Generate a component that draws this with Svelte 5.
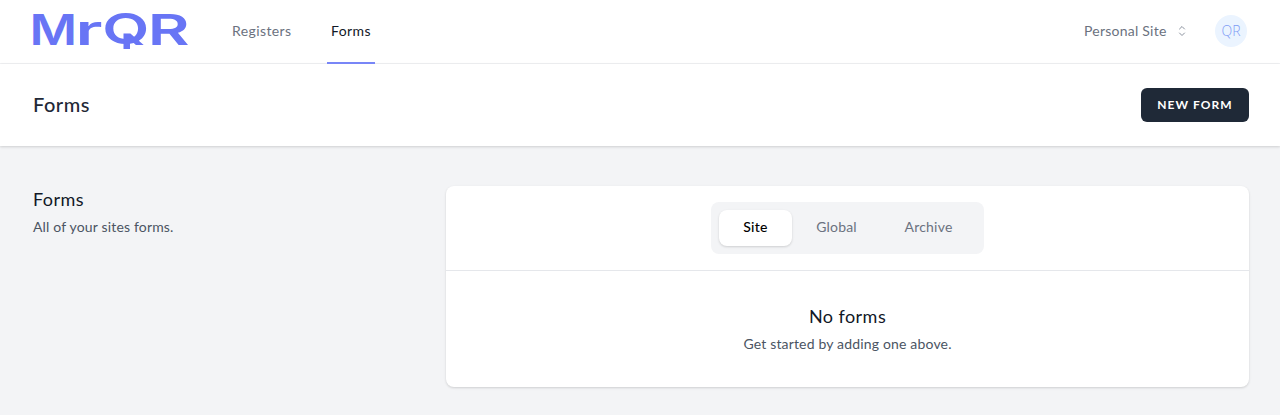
<script>
  const nav = [
    { label: 'Registers', active: false },
    { label: 'Forms', active: true }
  ];
  const tabs = ['Site', 'Global', 'Archive'];
  let selected = $state('Site');
</script>

<div class="page">
  <nav class="topbar">
    <svg class="logo" width="156" height="38" viewBox="0 0 156 38" aria-label="MrQR">
      <defs>
        <clipPath id="bowl"><rect x="70" y="-2" width="48" height="34" /></clipPath>
      </defs>
      <g class="letters">
        <text transform="translate(-3.6 31.5) scale(1.2 1)">M</text>
        <text transform="translate(42.4 31.5) scale(1.58 .96)">r</text>
        <g clip-path="url(#bowl)"><text transform="translate(69.2 31.3) scale(1.42 1)">Q</text></g>
        <text transform="translate(114.7 31.5) scale(1.49 1)">R</text>
      </g>
      <rect class="tail" x="90.5" y="21" width="6.5" height="15" />
    </svg>
    <div class="links">
      {#each nav as item}
        <a class="link" class:active={item.active} href="#top"><span class="{item.label.toLowerCase()}">{item.label}</span></a>
      {/each}
    </div>
    <div class="account">
      <span class="site">Personal Site</span>
      <svg class="chevrons" width="16" height="16" viewBox="0 0 24 24" fill="none" stroke="currentColor" stroke-width="1.5" stroke-linecap="round" stroke-linejoin="round">
        <path d="M8.25 15 12 18.75 15.75 15M8.25 9 12 5.25 15.75 9" />
      </svg>
      <span class="avatar">QR</span>
    </div>
  </nav>

  <header class="heading">
    <h1>Forms</h1>
    <button class="new">New form</button>
  </header>

  <main>
    <section class="intro">
      <h2>Forms</h2>
      <p>All of your sites forms.</p>
    </section>
    <section class="card">
      <div class="tabbar">
        <div class="tabs">
          {#each tabs as tab}
            <button class="tab {tab.toLowerCase()}" class:selected={selected === tab} onclick={() => (selected = tab)}>{tab}</button>
          {/each}
        </div>
      </div>
      <div class="empty">
        <h2>No forms</h2>
        <p>Get started by adding one above.</p>
      </div>
    </section>
  </main>
</div>

<style>
  :global(body) { margin: 0; background: #f3f4f6; }
  * { box-sizing: border-box; }
  .page { min-height: 415px; background: #f3f4f6; font: 14px/20px Lato, sans-serif; color: #111827; }
  .topbar { display: flex; height: 64px; padding: 0 33px; background: #fff; border-bottom: 1px solid #f0f1f3; }
  .logo { margin-top: 13px; flex: none; overflow: visible; }
  .letters { font: 600 43px Inter, sans-serif; fill: #6875f5; }
  .tail { fill: #6875f5; }
  .links { display: flex; margin-left: 39px; gap: 31px; }
  .link { display: flex; height: 64px; padding: 0 4px; align-items: center; color: #6b7280; text-decoration: none; font-weight: 400; border-bottom: 2px solid transparent; }
  .link.active { color: #111827; border-color: #7886f7; }
  .registers { width: 60px; letter-spacing: .4px; }
  .forms { width: 40px; letter-spacing: .4px; }
  .account { display: flex; align-items: center; margin-left: auto; height: 61px; color: #6b7280; }
  .site { width: 83px; white-space: nowrap; letter-spacing: .24px; }
  .chevrons { margin-left: 7px; color: #8b929e; }
  .avatar { width: 32px; height: 32px; margin-left: 25px; border-radius: 50%; background: #ebf4ff; color: #7f9cf5; font: 300 14px/32px "Open Sans", sans-serif; text-align: center; }
  .heading { display: flex; height: 82px; padding: 0 31px 0 33px; align-items: center; justify-content: space-between; background: #fff; box-shadow: 0 1px 3px rgba(0,0,0,.1), 0 1px 2px rgba(0,0,0,.06); }
  h1, h2, p { margin: 0; }
  h1 { padding-bottom: 2px; font-size: 20px; line-height: 28px; font-weight: 500; color: #1f2937; letter-spacing: .5px; }
  button { border: 0; margin: 0; font-family: inherit; cursor: pointer; }
  .new { width: 108px; height: 34px; padding: 0; border-radius: 6px; background: #1f2937; color: #fff; font-size: 12px; line-height: 16px; font-weight: 700; letter-spacing: 1.05px; text-transform: uppercase; }
  main { display: grid; grid-template-columns: 389px 803px; gap: 24px; padding: 39px 31px 28px 33px; }
  h2 { font-size: 18px; line-height: 28px; font-weight: 400; letter-spacing: .45px; }
  p { margin-top: 4px; color: #4b5563; letter-spacing: .17px; white-space: nowrap; }
  .card { height: 201px; margin-top: 1px; background: #fff; border-radius: 8px; box-shadow: 0 1px 3px rgba(0,0,0,.1), 0 1px 2px rgba(0,0,0,.06); }
  .tabbar { display: flex; justify-content: center; height: 85px; padding-top: 16px; border-bottom: 1px solid #e5e7eb; }
  .tabs { display: flex; width: 273px; height: 52px; padding: 8px; border-radius: 8px; background: #f3f4f6; }
  .tab { height: 36px; padding: 0 0 2px; border-radius: 8px; background: transparent; color: #6b7280; font-size: 14px; line-height: 20px; letter-spacing: .2px; }
  .tab.site { width: 73px; }
  .tab.global { width: 89px; }
  .tab.archive { width: 95px; }
  .tab.selected { background: #fff; color: #000; font-weight: 500; letter-spacing: .3px; box-shadow: 0 1px 3px rgba(0,0,0,.1), 0 1px 2px rgba(0,0,0,.06); }
  .empty { padding-top: 31px; text-align: center; }
  .empty p { margin-top: 4px; }
</style>
